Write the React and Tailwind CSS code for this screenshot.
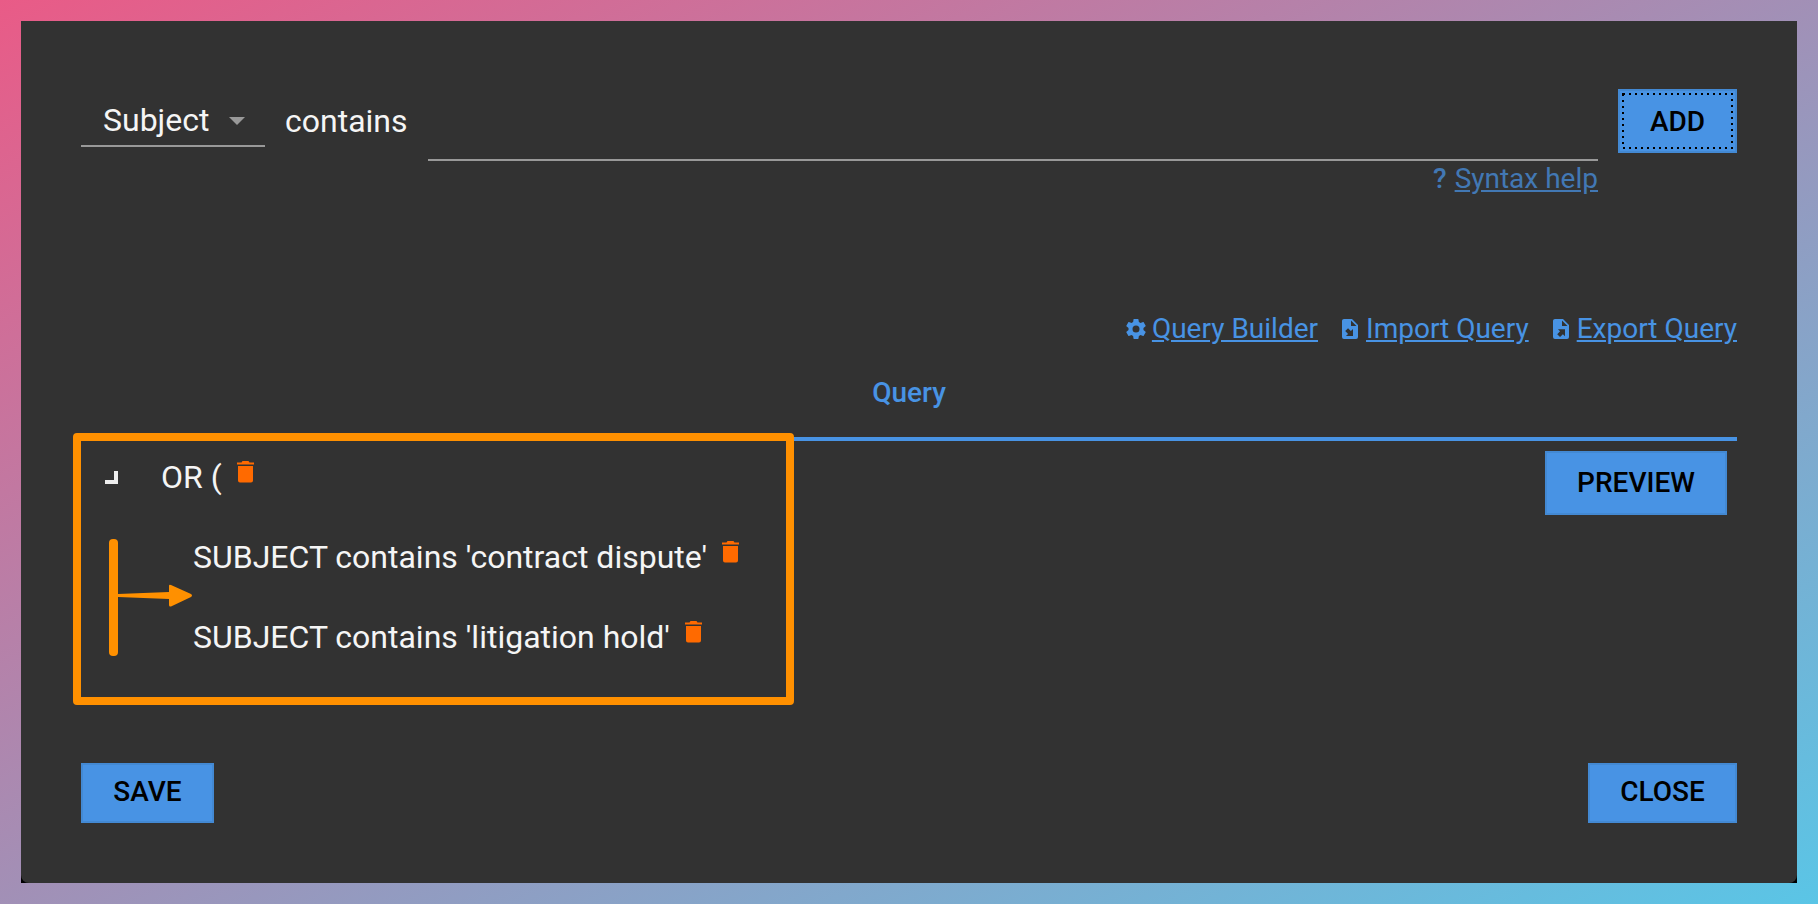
import { useState } from 'react';

const buttonClass =
  'flex items-center justify-center bg-[#4893e4] border-2 border-[#4389d3] text-[28px] leading-8 font-medium text-black uppercase cursor-pointer';

const conditions = [
  { id: 1, text: "SUBJECT contains 'contract dispute'" },
  { id: 2, text: "SUBJECT contains 'litigation hold'" },
];

const GearIcon = () => (
  <svg viewBox="2 2 20 20" className="w-5 h-5" fill="currentColor">
    <path d="M12 15.5A3.5 3.5 0 0 1 8.5 12 3.5 3.5 0 0 1 12 8.5a3.5 3.5 0 0 1 3.5 3.5 3.5 3.5 0 0 1-3.5 3.5m7.43-2.53c.04-.32.07-.64.07-.97s-.03-.66-.07-1l2.11-1.63c.19-.15.24-.42.12-.64l-2-3.46c-.12-.22-.39-.31-.61-.22l-2.49 1c-.52-.39-1.06-.73-1.69-.98l-.37-2.65A.506.506 0 0 0 14 2h-4c-.25 0-.46.18-.5.42l-.37 2.65c-.63.25-1.17.59-1.69.98l-2.49-1c-.22-.09-.49 0-.61.22l-2 3.46c-.13.22-.07.49.12.64L4.57 11c-.04.34-.07.67-.07 1s.03.65.07.97l-2.11 1.66c-.19.15-.25.42-.12.64l2 3.46c.12.22.39.3.61.22l2.49-1.01c.52.4 1.06.74 1.69.99l.37 2.65c.04.24.25.42.5.42h4c.25 0 .46-.18.5-.42l.37-2.65c.63-.26 1.17-.59 1.69-.99l2.49 1.01c.22.08.49 0 .61-.22l2-3.46c.12-.22.07-.49-.12-.64z" />
  </svg>
);

const ImportIcon = () => (
  <svg viewBox="4 2 16 20" className="w-4 h-5 mr-0.5" fill="currentColor">
    <path d="M14 2H6c-1.11 0-2 .89-2 2v16a2 2 0 0 0 2 2h12a2 2 0 0 0 2-2V8zm-1 1.5L18.5 9H13zM10.05 11.22l2.83 2.83L15 11.93V19H7.93l2.12-2.12-2.83-2.83z" />
  </svg>
);

const ExportIcon = () => (
  <svg viewBox="4 2 16 20" className="w-4 h-5 mr-0.5" fill="currentColor">
    <path d="M6 2c-1.11 0-2 .89-2 2v16a2 2 0 0 0 2 2h12a2 2 0 0 0 2-2V8l-6-6zm7 1.5L18.5 9H13zM8.93 12.22H16v7.07l-2.12-2.12L11.05 20l-2.83-2.83 2.83-2.83z" />
  </svg>
);

const DeleteButton = ({ label }) => (
  <button
    type="button"
    aria-label={label}
    className="ml-[15px] mb-2.5 text-[#ff6a00] cursor-pointer"
  >
    <svg viewBox="0 0 17 22" className="w-[17px] h-[22px]" fill="currentColor">
      <path d="M0 1.5h4.5L5.5 0h6l1 1.5H17v2H0zM1 5h15v14.5a2 2 0 0 1-2 2H3a2 2 0 0 1-2-2z" />
    </svg>
  </button>
);

const QueryLink = ({ icon, children }) => (
  <span className="flex items-center gap-1.5">
    {icon}
    <a href="#" className="underline">
      {children}
    </a>
  </span>
);

const ConditionForm = () => {
  const [field, setField] = useState('Subject');
  const [value, setValue] = useState('');

  return (
    <form
      className="flex items-start gap-5"
      onSubmit={(e) => e.preventDefault()}
    >
      <div className="relative">
        <select
          aria-label="Field"
          value={field}
          onChange={(e) => setField(e.target.value)}
          className="appearance-none block w-[184px] h-[58px] pl-[22px] pt-1.5 border-b-2 border-[#999] bg-transparent text-[32px] leading-10 text-[#f5f5f5] outline-0"
        >
          <option>Subject</option>
        </select>
        <svg
          viewBox="0 0 16 8"
          className="absolute right-5 top-7 w-4 h-2 pointer-events-none"
          fill="#999"
        >
          <path d="M0 0h16L8 8z" />
        </svg>
      </div>
      <label htmlFor="value" className="pt-3 text-[32px] leading-10">
        contains
      </label>
      <div className="flex-1">
        <input
          type="text"
          id="value"
          value={value}
          onChange={(e) => setValue(e.target.value)}
          className="block w-full h-[72px] border-b-2 border-[#999] bg-transparent text-[32px] outline-0"
        />
        <div className="flex justify-end gap-2 pt-0.5 text-[28px] leading-8 text-[#4278b4]">
          <span className="font-medium">?</span>
          <a href="#" className="underline">
            Syntax help
          </a>
        </div>
      </div>
      <button
        type="submit"
        className={`${buttonClass} relative pt-0.5 w-[119px] h-16`}
      >
        Add
        <svg className="absolute inset-0 w-full h-full" fill="none">
          <rect
            x="3"
            y="3"
            width="109"
            height="54"
            stroke="#000"
            strokeWidth="2"
            strokeDasharray="2 4"
          />
        </svg>
      </button>
    </form>
  );
};

const QueryTree = () => (
  <div className="relative flex items-start justify-between border-t-4 border-[#4893e4] pr-2.5">
    <ul className="flex flex-col gap-4 pt-1 text-[32px] leading-10">
      <li className="flex items-center h-16 pl-6">
        <button type="button" aria-label="Collapse group" className="mr-[43px]">
          <svg viewBox="0 0 13 13" className="w-[13px] h-[13px]" fill="#eee">
            <path d="M9 0h4v13H0V9h9z" />
          </svg>
        </button>
        <span>OR (</span>
        <DeleteButton label="Delete group" />
      </li>
      {conditions.map((condition) => (
        <li key={condition.id} className="flex items-center h-16 pl-28">
          <span>{condition.text}</span>
          <DeleteButton label="Delete condition" />
        </li>
      ))}
    </ul>
    <button type="button" className={`${buttonClass} mt-2.5 w-[182px] h-16`}>
      Preview
    </button>

    {/* callout drawn over the tree */}
    <div className="absolute -left-2 -top-2 w-[721px] h-[272px] border-8 border-[#ff9000] rounded pointer-events-none">
      <svg
        viewBox="0 0 84 118"
        className="absolute left-7 top-[98px] w-[84px] h-[118px]"
        fill="#ff9000"
      >
        <rect width="9" height="117" rx="4" />
        <path d="M9 55L60 53V47Q60 45 62 46L82 55Q84 56.5 82 58L62 67.5Q60 68 60 66V60L9 58z" />
      </svg>
    </div>
  </div>
);

const App = () => {
  return (
    <div className="min-h-screen flex p-[21px] bg-linear-to-br/srgb from-[#e95b87] to-[#5ac5e6] font-['Roboto',sans-serif]">
      <div className="flex-1 flex bg-black">
        <main className="flex-1 flex flex-col px-[60px] pt-[68px] pb-[60px] rounded-b-lg bg-[#323232] text-[#f5f5f5]">
          <ConditionForm />
          <nav className="flex justify-end gap-6 mt-[118px] text-[28px] leading-8 text-[#4893e4]">
            <QueryLink icon={<GearIcon />}>Query Builder</QueryLink>
            <QueryLink icon={<ImportIcon />}>Import Query</QueryLink>
            <QueryLink icon={<ExportIcon />}>Export Query</QueryLink>
          </nav>
          <h2 className="mt-8 mb-7 text-center text-[28px] leading-8 font-medium text-[#4893e4]">
            Query
          </h2>
          <QueryTree />
          <div className="flex justify-between mt-auto">
            <button
              type="button"
              className={`${buttonClass} pb-0.5 w-[133px] h-[60px]`}
            >
              Save
            </button>
            <button
              type="button"
              className={`${buttonClass} pb-0.5 w-[149px] h-[60px]`}
            >
              Close
            </button>
          </div>
        </main>
      </div>
    </div>
  );
};

export default App;
